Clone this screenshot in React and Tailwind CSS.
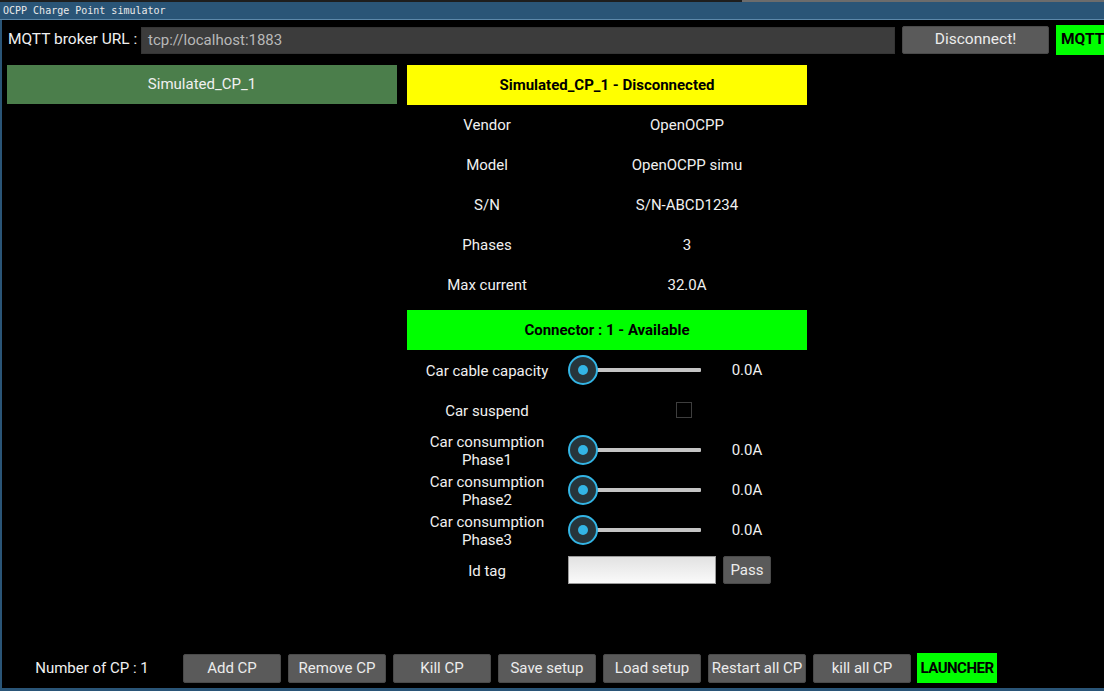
import React from 'react';

const info = [
  ['Vendor', 'OpenOCPP'],
  ['Model', 'OpenOCPP simu'],
  ['S/N', 'S/N-ABCD1234'],
  ['Phases', '3'],
  ['Max current', '32.0A'],
];

const bottomButtons = ['Add CP', 'Remove CP', 'Kill CP', 'Save setup', 'Load setup', 'Restart all CP', 'kill all CP'];

function HoloSlider() {
  return (
    <div className="relative w-[140px] h-[40px] flex items-center">
      <div className="absolute left-[16px] w-[118px] h-[4px] bg-[#c4c4c4] rounded-[1px]" />
      <div className="relative ml-[1px] w-[30px] h-[30px] rounded-full border-2 border-[#33b5e5] bg-[#27353b] flex items-center justify-center">
        <div className="w-[10px] h-[10px] rounded-full bg-[#33b5e5]" />
      </div>
    </div>
  );
}

function Row({ label, children }) {
  return (
    <div className="flex items-center h-[40px]">
      <div className="w-[160px] text-center leading-[18px] pt-[1px]">{label}</div>
      {children}
    </div>
  );
}

function SliderRow({ label }) {
  return (
    <Row label={label}>
      <HoloSlider />
      <div className="w-[80px] text-center pt-[1px]">0.0A</div>
    </Row>
  );
}

function GrayButton({ children, className = '' }) {
  return (
    <button className={`shrink-0 bg-[#5a5a5a] text-[#ececec] rounded-[2px] border border-[#4a4a4a] ${className}`}>
      {children}
    </button>
  );
}

export default function App() {
  return (
    <div className="w-[1104px] h-[691px] bg-black flex flex-col overflow-hidden text-[#f0f0f0] text-[15px]" style={{ fontFamily: 'Roboto, "Liberation Sans", sans-serif' }}>
      {/* top desktop strip */}
      <div className="flex h-[2px] shrink-0">
        <div className="w-[742px] bg-[#1e1e1e]" />
        <div className="flex-1 bg-[#6c6c6c]" />
      </div>
      {/* title bar */}
      <div className="h-[18px] shrink-0 bg-[#2a5577] border-b border-[#5c88aa] flex items-center pl-[3px] text-[10px] text-[#eaeaea]" style={{ fontFamily: '"DejaVu Sans Mono", monospace' }}>
        OCPP Charge Point simulator
      </div>

      <div className="flex-1 flex flex-col border-l-2 border-b-[3px] border-[#2a5577] min-h-0 overflow-hidden">
        {/* broker row */}
        <div className="flex items-center h-[30px] mt-[5px] pl-[6px] gap-[7px] text-[15.5px]">
          <span className="w-[126px] shrink-0 whitespace-nowrap">MQTT broker URL :</span>
          <div className="w-[754px] shrink-0 h-[27px] bg-[#3c3c3c] border border-[#353535] flex items-center pl-[6px] text-[#b8b8b8] text-[15px]">
            tcp://localhost:1883
          </div>
          <GrayButton className="w-[147px] h-[28px] text-[15.5px]">Disconnect!</GrayButton>
          <div className="w-[60px] h-[30px] shrink-0 bg-[#00ff00] text-black font-bold flex items-center pl-[5px] text-[15.5px]">
            MQTT
          </div>
        </div>

        {/* main */}
        <div className="flex gap-[10px] pl-[5px] mt-[10px]">
          <div className="w-[390px] h-[39px] bg-[#4b7e4b] flex items-center justify-center text-[15px]">
            Simulated_CP_1
          </div>
          <div className="w-[400px] flex flex-col">
            <div className="h-[40px] bg-[#ffff00] text-black font-bold flex items-center justify-center pt-[1px]">
              Simulated_CP_1 - Disconnected
            </div>
            {info.map(([k, v]) => (
              <div key={k} className="flex items-center h-[40px] pt-[1px]">
                <div className="w-[160px] text-center">{k}</div>
                <div className="w-[240px] text-center">{v}</div>
              </div>
            ))}
            <div className="h-[40px] mt-[5px] bg-[#00ff00] text-black font-bold flex items-center justify-center pt-[1px]">
              Connector : 1 - Available
            </div>
            <SliderRow label="Car cable capacity" />
            <Row label="Car suspend">
              <div className="ml-[109px] w-[16px] h-[16px] border border-[#3e3e3e]" />
            </Row>
            <SliderRow label={<>Car consumption<br />Phase1</>} />
            <SliderRow label={<>Car consumption<br />Phase2</>} />
            <SliderRow label={<>Car consumption<br />Phase3</>} />
            <Row label="Id tag">
              <div className="ml-[1px] w-[148px] h-[28px] bg-gradient-to-b from-[#e2e2e2] to-[#fafafa] border border-[#9a9a9a]" />
              <GrayButton className="ml-[7px] w-[48px] h-[28px] text-[15px]">Pass</GrayButton>
            </Row>
          </div>
        </div>

        {/* bottom bar */}
        <div className="mt-auto mb-[5px] flex items-center pl-[5px] h-[30px]">
          <div className="w-[170px] text-center pt-[1px]">Number of CP : 1</div>
          <div className="ml-[6px] flex items-center gap-[7px]">
            {bottomButtons.map((b) => (
              <GrayButton key={b} className="w-[98px] h-[29px] text-[15px]">{b}</GrayButton>
            ))}
            <div className="ml-[-1px] w-[80px] h-[30px] bg-[#00ff00] text-black font-bold flex items-center justify-center text-[15px] tracking-[-0.5px]">
              LAUNCHER
            </div>
          </div>
        </div>
      </div>
    </div>
  );
}
